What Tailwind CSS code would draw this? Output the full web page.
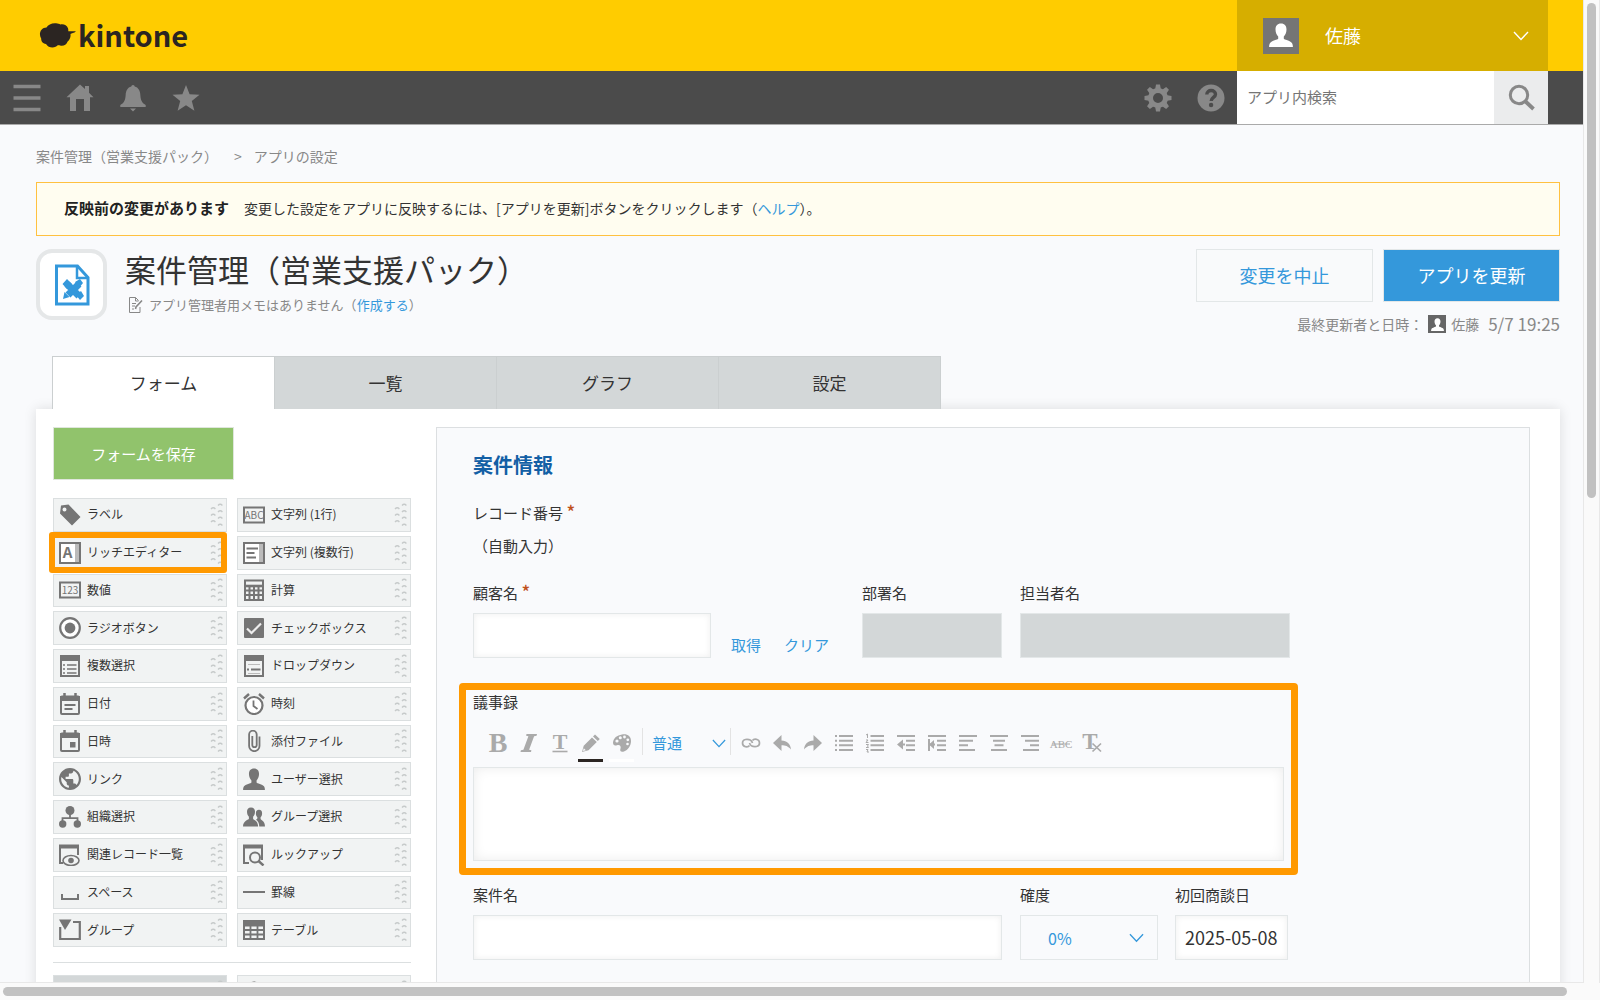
<!DOCTYPE html>
<html lang="ja">
<head>
<meta charset="utf-8">
<title>案件管理（営業支援パック） - アプリの設定</title>
<script src="https://cdn.jsdelivr.net/npm/@tailwindcss/browser@4"></script>
</head>
<body class="flex h-screen flex-col overflow-hidden bg-[#fafafa] font-['Noto_Sans_CJK_JP',sans-serif] text-[15px] leading-6 text-[#333]">

<svg class="hidden" xmlns="http://www.w3.org/2000/svg">
  <symbol id="person" viewBox="0 0 24 24"><path fill="currentColor" d="M12 .5c3.700 0 5.500 2.500 5.500 6 0 3-1.300 5.700-2.700 7v2.300c0 .8 6.800 2 8.100 4.200.6.900 1 2.400 1 4H.1c0-1.600.4-3.100 1-4 1.300-2.200 8.100-3.400 8.100-4.200v-2.300c-1.400-1.300-2.700-4-2.700-7 0-3.500 1.800-6 5.500-6z"/></symbol>
  <symbol id="grip" viewBox="0 0 13 26"><g fill="none" stroke="#c6caca" stroke-width="1.300"><path d="M8 3.500q2.200-2.500 4.400 0M8 10q2.200-2.500 4.400 0M8 16.500q2.200-2.500 4.400 0M8 23.500q2.200-2.500 4.400 0M1 7q2.200-2.500 4.400 0M1 13.500q2.200-2.500 4.400 0M1 20q2.200-2.500 4.400 0"/></g></symbol>
  <symbol id="chev" viewBox="0 0 16 10"><path d="M1 1l7 7.500L15 1" fill="none" stroke="currentColor" stroke-width="1.400"/></symbol>
</svg>

<div class="flex min-h-0 flex-1">
<div class="min-w-0 flex-1 overflow-hidden border-b border-[#e8e8e8] bg-[#f9fafc]">

  <header class="flex h-[71px] bg-[#ffcc00] pr-[35px]">
    <a href="#" class="flex items-center pl-[39px] text-[29px] font-bold leading-none text-[#2b2522]">
      <svg class="mr-[2px] h-[27px] w-[37px]" viewBox="0 0 37 27"><path fill="currentColor" d="M1 13c-.5-4 2.500-7.500 6.500-7.500C9 2.500 13 .8 17 1.200c2 .1 3.400.5 4.400 1.300 3-.8 6.500.6 7.600 3.800.3 1 .4 1.900.3 2.900 2 .3 4.700-.2 7.700.2-2 1.500-4.500 1.600-5.500 2.600.6 4-1.900 6.800-3 7.700-1 2.800-3.500 4.300-6.500 4-1.500 0-2.200-.3-3-.6-2.500 3.300-9.500 3.500-12-1.100C3.500 21.500 2 19 2.200 16.500 1.500 15.500 1.100 14.200 1 13z"/></svg>
      <span class="pb-[3px]">kintone</span>
    </a>
    <button class="ml-auto flex w-[311px] items-center bg-[#d6ae00] pl-[26px] pr-[19px] text-lg text-white">
      <span class="mr-[26px] flex size-9 items-end justify-center bg-[#757575] pb-[7px]"><svg class="size-6"><use href="#person"/></svg></span>
      <span class="pb-[2px]">佐藤</span>
      <svg class="ml-auto h-[10px] w-4"><use href="#chev"/></svg>
    </button>
  </header>

  <nav class="flex h-[54px] border-b border-[#aaa] bg-[#4b4b4b] pr-[35px] text-[#888] [&>button]:flex [&>button]:w-[53px] [&>button]:items-center [&>button]:justify-center">
    <button aria-label="メニュー"><svg class="size-7" viewBox="0 0 28 28"><path d="M.5 2.500h27M.5 14h27M.5 25.500h27" stroke="currentColor" stroke-width="3.500"/></svg></button>
    <button aria-label="ホーム"><svg class="size-7" viewBox="0 0 28 28"><path fill="currentColor" d="M14 .5l5 4.600V2h4v6.800l4.500 4.400H24V27h-6V15h-8v12H4V13.200H.5z"/></svg></button>
    <button aria-label="通知"><svg class="size-7" viewBox="0 0 28 28"><path fill="currentColor" d="M12.300 2.600a1.700 1.700 0 0 1 3.400 0c3.700 1 5.300 4 5.600 8 .3 5 1.200 8.400 5.400 10.400v2H1.300v-2c4.200-2 5.100-5.400 5.400-10.400.3-4 1.900-7 5.600-8zM11 24.500h6l-3 3z"/></svg></button>
    <button aria-label="お気に入り"><svg class="size-7" viewBox="0 0 28 28"><path fill="currentColor" d="M14 1l3.600 9.200 9.900.5-7.700 6.200 2.600 9.800L14 21.300l-8.400 5.400 2.600-9.800L.5 10.700l9.900-.5z"/></svg></button>
    <div class="flex-1"></div>
    <button aria-label="設定"><svg class="size-7" viewBox="0 0 28 28"><g fill="currentColor"><path d="M11 6l1-5.500h4L17 6zM22 11l5.500 1v4L22 17zM17 22l-1 5.500h-4L11 22zM6 17l-5.500-1v-4L6 11z"/><path transform="rotate(45 14 14)" d="M11 6l1-5.500h4L17 6zM22 11l5.500 1v4L22 17zM17 22l-1 5.500h-4L11 22zM6 17l-5.500-1v-4L6 11z"/></g><circle cx="14" cy="14" r="7.500" fill="none" stroke="currentColor" stroke-width="5"/></svg></button>
    <button aria-label="ヘルプ"><svg class="size-7" viewBox="0 0 28 28"><circle cx="14" cy="14" r="13.500" fill="currentColor"/><path d="M9.800 10.500c0-5.500 8.700-5 8.700-.3 0 3.300-4.300 3.200-4.300 6.800" fill="none" stroke="#4b4b4b" stroke-width="3.400"/><circle cx="14.100" cy="21" r="2.200" fill="#4b4b4b"/></svg></button>
    <input type="text" aria-label="アプリ内検索" placeholder="アプリ内検索" class="w-[257px] bg-white px-[10px] pb-[2px] text-[15px] placeholder:text-[#757575]">
    <button aria-label="検索" class="w-[54px]! bg-[#ebeced]"><svg class="size-[27px]" viewBox="0 0 27 27"><circle cx="11" cy="11" r="8.700" fill="none" stroke="currentColor" stroke-width="3"/><path d="M17 17l8.500 8" stroke="currentColor" stroke-width="3.800"/></svg></button>
  </nav>

  <main class="pl-9 pr-[23px] pt-[19px]">
    <div class="flex gap-3 text-sm leading-6 text-[#888]"><a href="#">案件管理（営業支援パック）</a><span class="ml-1">&gt;</span><a href="#">アプリの設定</a></div>

    <div class="mt-[14px] flex h-[54px] items-center border border-[#ffc140] bg-[#fffdf0] pb-[2px] pl-[27px] text-sm">
      <strong class="mr-[15px] text-[15px] text-[#222]">反映前の変更があります</strong>
      <span>変更した設定をアプリに反映するには、[アプリを更新]ボタンをクリックします（<a href="#" class="text-[#3498db]">ヘルプ</a>）。</span>
    </div>

    <div class="mt-[13px] flex items-start">
      <div class="flex size-[71px] items-center justify-center rounded-2xl border-4 border-[#e5e7e8] bg-white text-[#3498db]">
        <svg class="h-[42px] w-9" viewBox="0 0 36 42"><path d="M2.500 2h21L34 13.500V40H2.500z" fill="none" stroke="currentColor" stroke-width="3"/><path d="M23 2v12h11" fill="none" stroke="currentColor" stroke-width="2.500"/><path d="M13 20l12 12M14 31l11-11" stroke="currentColor" stroke-width="7"/><path d="M8.500 20l4.500-5 5 5-5 5zM21 18l5-3 3 4-4 5zM9 35l1.500-7 5 5zM22 31l5-4 3 5-4 4z" fill="currentColor"/></svg>
      </div>
      <div class="pl-[18px]">
        <h1 class="text-[31px] leading-[40px]">案件管理（営業支援パック）</h1>
        <p class="mt-[5px] flex items-center gap-[6px] pl-1 text-[13px] leading-[22px] text-[#888]">
          <svg class="h-4 w-[14px]" viewBox="0 0 14 16" fill="none" stroke="currentColor"><path d="M11 10v5.500H.5V.5h6l3 3M6.500.5v3.500h3M3 6.500h4M3 9h3M3 12h2"/><path d="M6.500 12l.5-2 6-6.500" stroke-width="1.600"/></svg>
          <span>アプリ管理者用メモはありません（<a href="#" class="text-[#3498db]">作成する</a>）</span>
        </p>
      </div>
      <div class="ml-auto">
        <div class="flex justify-end gap-[10px] text-lg [&>button]:pb-[2px]">
          <button class="h-[53px] w-[177px] border border-[#e3e7e8] bg-[#f9fafb] text-[#3498db]">変更を中止</button>
          <button class="h-[53px] w-[177px] border border-[#e3e7e8] bg-[#3498db] text-white">アプリを更新</button>
        </div>
        <p class="mt-[10px] flex items-center justify-end text-sm leading-6 text-[#888]">
          <span>最終更新者と日時：</span>
          <span class="ml-[5px] flex size-[18px] items-center justify-center bg-[#666] text-white"><svg class="size-[13px]"><use href="#person"/></svg></span>
          <span class="ml-[5px]">佐藤</span><span class="ml-[9px] text-[17px] leading-6">5/7 19:25</span>
        </p>
      </div>
    </div>

    <div class="mt-5 flex pl-4 text-[17px] [&>button]:h-[53px] [&>button]:w-[222px] [&>button]:border [&>button]:border-b-0 [&>button]:border-[#cbcfd0]">
      <button class="relative z-10 w-[223px]! bg-white">フォーム</button><button class="border-l-0! bg-[#d3d7d8]">一覧</button><button class="border-l-0! bg-[#d3d7d8]">グラフ</button><button class="border-l-0! bg-[#d3d7d8]">設定</button>
    </div>

    <div class="flex gap-[25px] bg-white pb-8 pl-[17px] pr-[30px] pt-[18px] shadow-[0_0_12px_rgba(0,0,0,0.12)]">
      <aside class="w-[358px] shrink-0">
        <button class="h-[53px] w-[181px] border border-[#dfe6dc] bg-[#91c36c] text-[15px] text-white">フォームを保存</button>

        <div class="mt-[18px] grid h-[449px] grid-cols-2 grid-rows-12 gap-x-[10px] gap-y-1 text-xs text-[#333] [&>button]:relative [&>button]:flex [&>button]:min-h-0 [&>button]:items-center [&>button]:border [&>button]:border-[#dbdfe0] [&>button]:bg-[#f1f3f3] [&>button]:pl-[5px] [&>button]:pr-[3px] [&_span]:ml-[6px] [&_span]:flex-1 [&_span]:pb-px [&_span]:text-left [&_.i]:size-[22px] [&_.i]:text-[#757575] [&_.g]:h-[26px] [&_.g]:w-[13px]">
          <button><svg class="i" viewBox="0 0 22 22"><path fill="currentColor" fill-rule="evenodd" d="M2 1.500L9.500.5 21.500 13 13 21.500 1 9.500zM5.500 3.500a2 2 0 1 0 0 4 2 2 0 0 0 0-4z"/></svg><span>ラベル</span><svg class="g"><use href="#grip"/></svg></button>
          <button><svg class="i" viewBox="0 0 22 22"><rect x="1" y="3.500" width="20" height="15" fill="none" stroke="currentColor" stroke-width="2"/><text x="11" y="15" text-anchor="middle" font-size="10" fill="currentColor">ABC</text></svg><span>文字列 (1行)</span><svg class="g"><use href="#grip"/></svg></button>
          <button><svg class="i" viewBox="0 0 22 22"><rect x="1" y="1" width="20" height="20" fill="#fff" stroke="currentColor" stroke-width="2"/><path d="M18 2v18" stroke="#bbb" stroke-width="4"/><text x="8.500" y="16" text-anchor="middle" font-size="15" font-weight="700" fill="currentColor">A</text></svg><span>リッチエディター</span><svg class="g"><use href="#grip"/></svg><i class="pointer-events-none absolute -bottom-1 -left-[5px] -right-px -top-[5px] rounded-[3px] border-[6px] border-[#ff9900]"></i></button>
          <button><svg class="i" viewBox="0 0 22 22"><rect x="1" y="1" width="20" height="20" fill="#fff" stroke="currentColor" stroke-width="2"/><path d="M18 2v18" stroke="#bbb" stroke-width="4"/><path d="M3.500 6.500H15M3.500 11h8M3.500 15.500H13" stroke="currentColor" stroke-width="2"/></svg><span>文字列 (複数行)</span><svg class="g"><use href="#grip"/></svg></button>
          <button><svg class="i" viewBox="0 0 22 22"><rect x="1" y="3.500" width="20" height="15" fill="none" stroke="currentColor" stroke-width="2"/><text x="11" y="15" text-anchor="middle" font-size="10" fill="currentColor">123</text></svg><span>数値</span><svg class="g"><use href="#grip"/></svg></button>
          <button><svg class="i" viewBox="0 0 22 22" fill="none" stroke="currentColor"><path d="M2 1.500h18v19.500H2z" stroke-width="2"/><path d="M2 7h18" stroke-width="2.600"/><path d="M2 11.500h18M2 16h18M6.500 7v14M11 7v14M15.500 7v14" stroke-width="2"/></svg><span>計算</span><svg class="g"><use href="#grip"/></svg></button>
          <button><svg class="i" viewBox="0 0 22 22"><circle cx="11" cy="11" r="9.800" fill="#fff" stroke="currentColor" stroke-width="2.200"/><circle cx="11" cy="11" r="5.400" fill="currentColor"/></svg><span>ラジオボタン</span><svg class="g"><use href="#grip"/></svg></button>
          <button><svg class="i" viewBox="0 0 22 22"><rect x="1" y="1" width="20" height="20" rx="1" fill="currentColor"/><path d="M4 11.500l4.500 4.500L18 6.500" fill="none" stroke="#eee" stroke-width="2.200"/></svg><span>チェックボックス</span><svg class="g"><use href="#grip"/></svg></button>
          <button><svg class="i" viewBox="0 0 22 22"><path d="M2 1h18v20H2z" fill="none" stroke="currentColor" stroke-width="2"/><path d="M1 3.500h20" stroke="currentColor" stroke-width="5"/><path d="M4 10h2M8 10h9.500M4 14h2M8 14h9.500M4 18h2M8 18h9.500" stroke="currentColor" stroke-width="1.600"/></svg><span>複数選択</span><svg class="g"><use href="#grip"/></svg></button>
          <button><svg class="i" viewBox="0 0 22 22"><path d="M2 1h18v20H2z" fill="none" stroke="currentColor" stroke-width="2"/><path d="M1 3.500h20" stroke="currentColor" stroke-width="5"/><path d="M4 14.500h2M8 14.500h9.500" stroke="currentColor" stroke-width="2"/><path d="M5 9.500h12M5 18.500h12" stroke="#bbb"/></svg><span>ドロップダウン</span><svg class="g"><use href="#grip"/></svg></button>
          <button><svg class="i" viewBox="0 0 22 22"><rect x="2" y="3.500" width="18" height="17.500" rx="1" fill="none" stroke="currentColor" stroke-width="2"/><path d="M1 5.500h20" stroke="currentColor" stroke-width="5"/><path d="M5.500 0v4M16.500 0v4" stroke="currentColor" stroke-width="2.500"/><path d="M5.500 12h11M5.500 16h8" stroke="currentColor" stroke-width="1.800"/></svg><span>日付</span><svg class="g"><use href="#grip"/></svg></button>
          <button><svg class="i" viewBox="0 0 22 22" fill="none" stroke="currentColor"><circle cx="11" cy="12.500" r="8.500" fill="#fff" stroke-width="2.200"/><path d="M10.500 7.500v5.500l4 3" stroke-width="1.800"/><path d="M1 5.500L6 1M21 5.500L16 1" stroke-width="2.400"/></svg><span>時刻</span><svg class="g"><use href="#grip"/></svg></button>
          <button><svg class="i" viewBox="0 0 22 22"><rect x="2" y="3.500" width="18" height="17.500" rx="1" fill="none" stroke="currentColor" stroke-width="2"/><path d="M1 5.500h20" stroke="currentColor" stroke-width="5"/><path d="M5.500 0v4M16.500 0v4" stroke="currentColor" stroke-width="2.500"/><path d="M11 12h5.500v5.500H11z" fill="currentColor"/></svg><span>日時</span><svg class="g"><use href="#grip"/></svg></button>
          <button><svg class="i" viewBox="0 0 22 22"><path d="M16.500 6.500V16a5.200 5.200 0 0 1-10.400 0V4.500a3.800 3.800 0 0 1 7.600 0V15a2.200 2.200 0 0 1-4.400 0V6" fill="none" stroke="currentColor" stroke-width="1.800"/></svg><span>添付ファイル</span><svg class="g"><use href="#grip"/></svg></button>
          <button><svg class="i" viewBox="2 2 20 20"><path fill="currentColor" d="M12 2C6.480 2 2 6.480 2 12s4.480 10 10 10 10-4.480 10-10S17.520 2 12 2zm-1 17.930c-3.950-.49-7-3.850-7-7.930 0-.62.080-1.210.21-1.790L9 15v1c0 1.100.9 2 2 2v1.930zm6.900-2.540c-.26-.81-1-1.390-1.900-1.390h-1v-3c0-.55-.45-1-1-1H8v-2h2c.55 0 1-.45 1-1V7h2c1.100 0 2-.9 2-2v-.41c2.930 1.190 5 4.060 5 7.410 0 2.080-.8 3.970-2.100 5.390z"/></svg><span>リンク</span><svg class="g"><use href="#grip"/></svg></button>
          <button><svg class="i"><use href="#person"/></svg><span>ユーザー選択</span><svg class="g"><use href="#grip"/></svg></button>
          <button><svg class="i" viewBox="0 0 22 22"><g fill="currentColor"><circle cx="11" cy="4.500" r="4.500"/><circle cx="3.700" cy="18" r="3.700"/><circle cx="18.300" cy="18" r="3.700"/></g><path d="M11 8v4M3.500 16v-3.800h15V16" fill="none" stroke="currentColor" stroke-width="1.800"/></svg><span>組織選択</span><svg class="g"><use href="#grip"/></svg></button>
          <button><svg class="i" viewBox="0 0 22 22"><g fill="currentColor"><path d="M8 1.500c2.800 0 4 1.700 4 4.300 0 2.200-.8 4-1.900 5v1.900c0 1 5 1.900 5 7.800H0c0-5.900 5.900-6.800 5.900-7.800v-1.900C4.800 9.800 4 8 4 5.800c0-2.600 1.200-4.300 4-4.300z"/><path d="M16 3.800c2.200 0 3.100 1.400 3.100 3.400 0 1.800-.6 3.200-1.500 4V13c0 1 4.400 1.500 4.400 7.500h-5.700c0-3.500-1.500-5.500-3.300-6.800 1-.5 1.400-1 1.400-2.500-.9-.8-1.500-2.200-1.500-4 0-2 .9-3.400 3.100-3.400z"/></g></svg><span>グループ選択</span><svg class="g"><use href="#grip"/></svg></button>
          <button><svg class="i" viewBox="0 0 22 22" fill="none" stroke="currentColor"><path d="M4 19H1V2h18v9" stroke-width="2"/><path d="M0 2.500h20" stroke-width="4"/><ellipse cx="12" cy="16.500" rx="8" ry="5" fill="#f1f3f3" stroke-width="1.600"/><circle cx="12" cy="16.500" r="2.800" fill="currentColor" stroke="none"/></svg><span>関連レコード一覧</span><svg class="g"><use href="#grip"/></svg></button>
          <button><svg class="i" viewBox="0 0 22 22" fill="none" stroke="currentColor"><path d="M6 19H1V2h18v14" stroke-width="2"/><path d="M0 2.500h20" stroke-width="4"/><circle cx="12" cy="13.500" r="5" fill="#f1f3f3" stroke-width="2"/><path d="M15.500 17l5 4.500" stroke-width="2.400"/></svg><span>ルックアップ</span><svg class="g"><use href="#grip"/></svg></button>
          <button><svg class="i" viewBox="0 0 22 22"><path d="M3 13v5h16v-5" fill="none" stroke="currentColor" stroke-width="2"/></svg><span>スペース</span><svg class="g"><use href="#grip"/></svg></button>
          <button><svg class="i" viewBox="0 0 22 22"><path d="M0 11h22" stroke="currentColor" stroke-width="2"/></svg><span>罫線</span><svg class="g"><use href="#grip"/></svg></button>
          <button><svg class="i" viewBox="0 0 22 22"><path d="M1.200 8v12h19.600V3H14" fill="none" stroke="currentColor" stroke-width="2.200"/><path d="M0 .5h12.500L6 11z" fill="currentColor"/></svg><span>グループ</span><svg class="g"><use href="#grip"/></svg></button>
          <button><svg class="i" viewBox="0 0 22 22" fill="none" stroke="currentColor"><path d="M1 2h20v18H1z" stroke-width="2"/><path d="M0 4.500h22" stroke-width="6"/><path d="M1 11h20M1 15.500h20M7.500 7v13M14.500 7v13" stroke-width="1.800"/></svg><span>テーブル</span><svg class="g"><use href="#grip"/></svg></button>
        </div>

        <hr class="mt-[15px] border-[#dbdfe0]">
        <div class="mt-3 grid grid-cols-2 gap-x-[10px] [&>button]:flex [&>button]:h-[34px] [&>button]:items-center [&>button]:border [&>button]:border-[#dbdfe0] [&>button]:pl-[5px] [&>button]:pr-[3px] [&_.g]:ml-auto [&_.g]:h-[26px] [&_.g]:w-[13px]">
          <button disabled aria-label="レコード番号" class="bg-[#d3d7d8]"><svg class="g"><use href="#grip"/></svg></button>
          <button aria-label="作成者" class="bg-[#f1f3f3] text-[#757575]"><svg class="size-[22px]"><use href="#person"/></svg><svg class="g"><use href="#grip"/></svg></button>
        </div>
      </aside>

      <form class="min-w-0 flex-1 border border-[#dcdfe1] bg-[#f9fafc] pb-16 pl-[22px] pt-[22px] [&_input]:h-[45px] [&_input]:border [&_input]:border-[#e3e7e8] [&_label]:block [&_label]:h-6">
        <h2 class="pl-[14px] text-xl leading-[30px] font-bold text-[#135fa5]">案件情報</h2>
        <div class="mt-[21px] h-6 pl-[14px]">レコード番号 <span class="text-lg leading-none font-medium text-[#c0501c]">*</span></div>
        <div class="mt-[9px] pl-[14px]">（自動入力）</div>

        <div class="mt-[23px] flex pl-[14px]">
          <div><label for="customer">顧客名 <span class="text-lg leading-none font-medium text-[#c0501c]">*</span></label><input id="customer" type="text" class="mt-2 w-[238px] bg-white shadow-[inset_0_0_6px_#eee]"></div>
          <div class="mr-[31px] mt-[52px] flex w-[120px] gap-[23px] pl-5 text-[#3498db] [&>button]:h-6 [&>button]:shrink-0"><button type="button">取得</button><button type="button">クリア</button></div>
          <div class="mr-[18px]"><label for="dept">部署名</label><input id="dept" type="text" disabled class="mt-2 w-[140px] bg-[#d3d7d8]"></div>
          <div><label for="contact">担当者名</label><input id="contact" type="text" disabled class="mt-2 w-[270px] bg-[#d3d7d8]"></div>
        </div>

        <div class="mt-[25px] w-[839px] rounded-[4px] border-[7px] border-[#ff9900] p-[7px] pt-0">
          <label for="minutes">議事録</label>
          <div class="flex h-[53px] items-start pl-[9px] pt-[14px] text-[#aaa] [&>button]:flex [&>button]:w-[31px] [&>button]:shrink-0 [&>button]:flex-col [&>button]:items-center [&>button]:pt-[5px] [&_svg]:size-5 [&_svg]:overflow-visible">
            <button type="button" aria-label="太字"><svg viewBox="0 0 20 20"><text x="10" y="19" text-anchor="middle" font-family="Liberation Serif" font-weight="700" font-size="28" fill="currentColor">B</text></svg></button>
            <button type="button" aria-label="斜体"><svg viewBox="0 0 20 20"><path d="M7.500 1H18l-.4 1.700-2.500.5-5 13.600 2.300.5-.4 1.700H1.500l.4-1.700 2.500-.5 5-13.600-2.300-.5z" fill="currentColor"/></svg></button>
            <button type="button" aria-label="下線"><svg viewBox="0 0 20 20"><text x="10" y="15.500" text-anchor="middle" font-family="Liberation Serif" font-weight="700" font-size="22" fill="currentColor">T</text><path d="M2.500 18.500h15" stroke="currentColor" stroke-width="1.600"/></svg></button>
            <button type="button" aria-label="文字色"><svg viewBox="0 0 20 20" fill="currentColor"><path d="M14 1.500l4.800 4.600-2 2L12 3.400zM11 4.400l4.800 4.700-8.300 8.200L1 19l1.700-6.300zM2.800 15.200l-.9 2.900 3-.9z" fill-rule="evenodd"/></svg><span class="mt-[6px] h-[3px] w-[25px] bg-[#2b2522]"></span></button>
            <button type="button" aria-label="背景色"><svg viewBox="0 0 20 20"><path d="M10 1.500C15 .5 19 3 19 8s-3 9-7 10.500c-3 1-4.500-.5-3.500-3 .8-2.500-1-4.300-3.500-3.300C2.500 13.200 1 12 1 9.500 1.500 5 5 2.300 10 1.500z" fill="currentColor"/><g fill="#f9fafc"><circle cx="5" cy="8" r="1.600"/><circle cx="8.300" cy="4.700" r="1.500"/><circle cx="12.500" cy="4" r="1.400"/><circle cx="15.800" cy="6.800" r="1.400"/><circle cx="15.500" cy="11" r="1.300"/></g></svg><span class="mt-[6px] h-[3px] w-[25px] bg-white"></span></button>
            <div class="relative ml-[5px] h-[27px] w-[89px] shrink-0 border-x border-[#e3e3e3] text-[#3498db]">
              <select aria-label="文字サイズ" class="h-[30px] w-full appearance-none bg-transparent pl-[9px] text-[15px] leading-[30px]"><option>普通</option></select>
              <svg class="pointer-events-none absolute right-1 top-[11px] h-[9px]! w-[14px]!"><use href="#chev"/></svg>
            </div>
            <div class="w-1 shrink-0"></div>
            <button type="button" aria-label="リンク"><svg viewBox="0 0 20 20" fill="none" stroke="currentColor" stroke-width="1.700"><path d="M8.500 12.500c-1 1.500-2.500 1.500-4 1.200-4-1-4-6.500 0-7.200C9 6 10.500 7 11.500 10"/><path d="M11.500 7.500c1-1.500 2.500-1.500 4-1.200 4 1 4 6.500 0 7.200C11 14 9.500 13 8.500 10"/></svg></button>
            <button type="button" aria-label="元に戻す"><svg viewBox="0 0 20 20" fill="currentColor"><path d="M9.500 2v5.500c5.500 0 9 3.500 9.500 9-3-3.500-5.500-4.300-9.500-4.300V18L1 10z"/></svg></button>
            <button type="button" aria-label="やり直す"><svg viewBox="0 0 20 20" fill="currentColor"><path d="M10.500 2v5.500c-5.500 0-9 3.500-9.500 9 3-3.500 5.500-4.300 9.500-4.300V18l8.500-8z"/></svg></button>
            <button type="button" aria-label="箇条書き"><svg viewBox="0 0 20 20" stroke="currentColor" stroke-width="2"><path d="M1 3h2M5 3h14M1 7.700h2M5 7.700h14M1 12.300h2M5 12.300h14M1 17h2M5 17h14"/></svg></button>
            <button type="button" aria-label="番号付きリスト"><svg viewBox="0 0 20 20" stroke="currentColor" fill="none"><path d="M5.500 3H19M5.500 7.700H19M5.500 12.300H19M5.500 17H19" stroke-width="2"/><path d="M1 2l1.500-1v4M1 7h2l-2 2.500h2.500M1 11.500h2.500l-1 1.500 1 1.500H1M1 16.500h2l-1 2.500h2"/></svg></button>
            <button type="button" aria-label="インデント解除"><svg viewBox="0 0 20 20" stroke="currentColor" stroke-width="2"><path d="M1 3h18M10 7.700h9M10 12.300h9M10 17h9M3 11.500h6"/><path d="M1 11.500L7 6.500v10z" fill="currentColor" stroke="none"/></svg></button>
            <button type="button" aria-label="インデント"><svg viewBox="0 0 20 20" stroke="currentColor" stroke-width="2"><path d="M1 3h18M10 7.700h9M10 12.300h9M10 17h9M3 11.500h5M2 6v12"/><path d="M2 11.500L7 7v9z" fill="currentColor" stroke="none"/></svg></button>
            <button type="button" aria-label="左揃え"><svg viewBox="0 0 20 20" stroke="currentColor" stroke-width="2"><path d="M1 3h18M1 7.700h14M1 12.300h9M1 17h16"/></svg></button>
            <button type="button" aria-label="中央揃え"><svg viewBox="0 0 20 20" stroke="currentColor" stroke-width="2"><path d="M1 3h18M4 7.700h12M5.500 12.300h9M2 17h16"/></svg></button>
            <button type="button" aria-label="右揃え"><svg viewBox="0 0 20 20" stroke="currentColor" stroke-width="2"><path d="M1 3h18M5 7.700h14M10 12.300h9M3 17h16"/></svg></button>
            <button type="button" aria-label="取り消し線"><svg viewBox="0 0 20 20"><text x="10" y="15" text-anchor="middle" font-family="Liberation Serif" font-size="11" fill="currentColor">ABC</text><path d="M1 11h18" stroke="currentColor" stroke-width="1"/></svg></button>
            <button type="button" aria-label="書式クリア"><svg viewBox="0 0 20 20"><text x="8" y="16" text-anchor="middle" font-family="Liberation Serif" font-weight="700" font-size="23" fill="currentColor">T</text><path d="M10.500 10.500l8.500 8M19 10.500l-8.500 8" stroke="currentColor" stroke-width="1.700"/></svg></button>
          </div>
          <textarea id="minutes" class="block h-[94px] w-full resize-none border border-[#e3e7e8] bg-white shadow-[inset_0_0_12px_#ececec]"></textarea>
        </div>

        <div class="mt-2 flex pl-[14px]">
          <div class="mr-[18px]"><label for="deal">案件名</label><input id="deal" type="text" class="mt-2 w-[529px] bg-white shadow-[inset_0_0_6px_#eee]"></div>
          <div class="mr-[17px]"><label for="prob">確度</label>
            <div class="relative mt-2 text-[#3498db]">
              <select id="prob" class="h-[45px] w-[138px] appearance-none border border-[#e3e7e8] bg-[#f9fafc] pl-[27px] text-base"><option>0%</option></select>
              <svg class="pointer-events-none absolute right-[14px] top-[18px] h-[10px] w-[15px]"><use href="#chev"/></svg>
            </div>
          </div>
          <div><label for="first">初回商談日</label><input id="first" type="text" value="2025-05-08" class="mt-2 w-[113px] bg-white px-[9px] pb-px text-lg shadow-[inset_0_0_6px_#eee]"></div>
        </div>
      </form>
    </div>
  </main>
</div>

<div class="w-[17px] border-x border-[#e8e8e8] bg-[#fafafa] px-[3px] pt-[3px]"><div class="h-[495px] rounded-full bg-[#c1c1c1]"></div></div>
</div>
<div class="flex h-[17px] items-center bg-[#fafafa] pl-[3px] pr-[33px]"><div class="h-[9px] flex-1 rounded-full bg-[#c1c1c1]"></div></div>
</body>
</html>
